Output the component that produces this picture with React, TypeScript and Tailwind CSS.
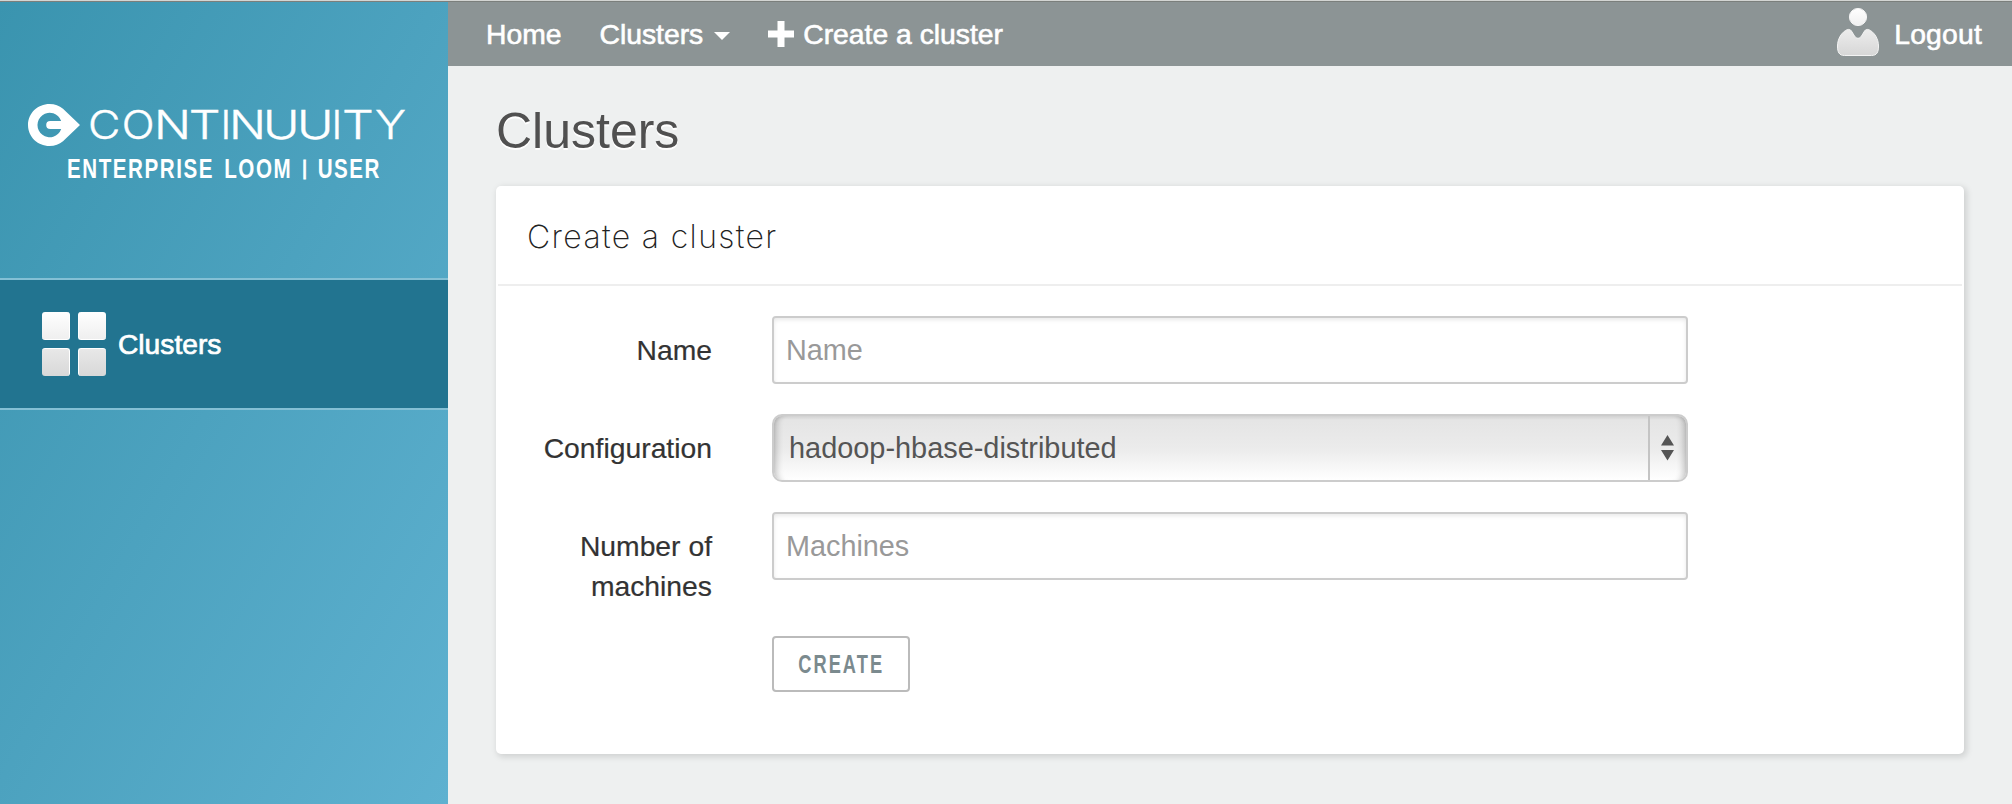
import type { ReactNode } from 'react';

function LogoMark() {
  return (
    <svg className="h-[42px] w-[53px] shrink-0" viewBox="0 0 53 42">
      <path
        fill="#fff"
        fillRule="evenodd"
        d="M21.5 0C9.600 0 0 9.300 0 21s9.600 21 21.500 21c5.500 0 9.700-1.800 13.500-4.800L52 21 35 4.800C31.200 1.800 27 0 21.500 0ZM33.200 17H22.200a4 4 0 0 0 0 8H33.200A12.200 12.200 0 1 1 33.200 17Z"
      />
    </svg>
  );
}

const letters: { char: string; x: number; width: number }[] = [
  { char: 'C', x: 7, width: 32.4 },
  { char: 'O', x: 40.7, width: 32.8 },
  { char: 'N', x: 73, width: 37 },
  { char: 'T', x: 107.8, width: 31.8 },
  { char: 'I', x: 139.4, width: 10.7 },
  { char: 'N', x: 148, width: 37 },
  { char: 'U', x: 182, width: 36.5 },
  { char: 'U', x: 216, width: 36.5 },
  { char: 'I', x: 250.4, width: 10.7 },
  { char: 'T', x: 260.9, width: 31.8 },
  { char: 'Y', x: 294, width: 31 },
];

function Wordmark() {
  return (
    <svg className="h-[42px] w-[330px] shrink-0 overflow-visible" viewBox="0 0 330 42">
      <text
        y="35.300"
        fill="#fff"
        stroke="#fff"
        strokeWidth="0.400"
        className="font-['Inter',sans-serif] text-[39.500px] font-light"
      >
        {letters.map((l, i) => (
          <tspan key={i} x={l.x} textLength={l.width} lengthAdjust="spacingAndGlyphs">
            {l.char}
          </tspan>
        ))}
      </text>
    </svg>
  );
}

function ClustersIcon() {
  return (
    <div className="grid size-16 shrink-0 grid-cols-2 gap-2">
      <span className="rounded-[3px] border-r border-b border-white bg-linear-to-b from-white to-[#efefef]" />
      <span className="rounded-[3px] border-b border-l border-white bg-linear-to-b from-white to-[#efefef]" />
      <span className="rounded-[3px] border-t border-r border-white bg-linear-to-b from-[#e8e8e8] to-[#d8d8d8]" />
      <span className="rounded-[3px] border-t border-l border-white bg-linear-to-b from-[#e8e8e8] to-[#d8d8d8]" />
    </div>
  );
}

function UserIcon() {
  return (
    <svg className="h-12 w-[42px] shrink-0" viewBox="0 0 42 48">
      <defs>
        <linearGradient id="user" x1="0" y1="0" x2="0" y2="48" gradientUnits="userSpaceOnUse">
          <stop offset="0" stopColor="#fff" />
          <stop offset="1" stopColor="#d6d6d6" />
        </linearGradient>
      </defs>
      <g fill="url(#user)" stroke="#f3f3f3" strokeWidth="1">
        <circle cx="21" cy="9" r="8.600" />
        <path d="M10.500 21.500c1.500-.3 3 .1 3.800 1.300l3.200 5.200c1.800 3 5.200 3 7 0l3.200-5.200c.8-1.200 2.300-1.600 3.800-1.300C37.500 24 41.500 31 41.500 38c0 6-1.500 9.500-7 9.500h-27C2 47.500.5 44 .5 38c0-7 4-14 10-16.500Z" />
      </g>
    </svg>
  );
}

function Row({ label, children }: { label: ReactNode; children: ReactNode }) {
  return (
    <div className="flex h-[98px] items-start">
      <div className="mr-[60px] w-[216px] pt-[14px] text-right text-[28.300px] leading-10 text-[#333] [-webkit-text-stroke:0.200px_#333]">
        {label}
      </div>
      {children}
    </div>
  );
}

const inputClass =
  "h-[68px] w-[916px] rounded-[4px] border-2 border-[#ccc] bg-white px-[12px] text-[28.800px] text-[#555] shadow-[inset_0_2px_4px_rgba(0,0,0,0.09)] outline-none placeholder:text-[#999] placeholder:opacity-100";

export default function App() {
  return (
    <div className="flex h-[804px] w-[2012px] flex-col overflow-hidden bg-[#eef0f0] font-['Liberation_Sans',Arial,sans-serif]">
      <div className="h-[2px] shrink-0 border-b border-[#7b7f7c] bg-[#d3d5d3]" />
      <div className="flex min-h-0 flex-1">
        <aside className="flex w-[448px] shrink-0 flex-col bg-linear-to-br from-[#3a94af] to-[#5eb1d0]">
          <div className="h-[276px] pt-[102px] text-white">
            <div className="flex h-[42px] pl-7">
              <LogoMark />
              <Wordmark />
            </div>
            <div className="mt-[8px] ml-[67px] flex h-[30px] w-[420px] origin-left scale-x-[0.735] items-baseline text-[28px] leading-[30px] font-bold tracking-[2.100px] whitespace-nowrap">
              <span>ENTERPRISE</span>
              <span className="ml-[14px]">LOOM</span>
              <span className="mr-[13px] ml-[14px] -translate-y-[3px] text-[20px] [-webkit-text-stroke:1px_#fff]">|</span>
              <span>USER</span>
            </div>
          </div>
          <a className="flex h-[132px] items-center gap-3 border-y-2 border-[#84c0d5] bg-[#227490] pl-[42px] text-white">
            <ClustersIcon />
            <span className="pt-px text-[28.200px] [-webkit-text-stroke:0.700px_#fff]">Clusters</span>
          </a>
        </aside>
        <main className="min-w-0 flex-1">
          <nav className="flex h-16 items-center bg-[#8c9495] pt-px pr-[30px] pl-[38px] text-[28.300px] text-white [-webkit-text-stroke:0.600px_#fff]">
            <a>Home</a>
            <a className="ml-[38px] flex items-center">
              Clusters
              <svg className="mt-[3px] ml-[11px] h-2 w-4" viewBox="0 0 16 8">
                <path fill="#fff" d="M0 0h16L8 8Z" />
              </svg>
            </a>
            <a className="ml-[38px] flex items-center">
              <svg className="-mt-[2px] mr-[9px] size-[26px]" viewBox="0 0 26 26">
                <path fill="#fff" d="M9.500 0h7v9.500H26v7h-9.500V26h-7v-9.500H0v-7h9.500Z" />
              </svg>
              Create a cluster
            </a>
            <a className="ml-auto flex items-center gap-[15px]">
              <span className="-mt-[6px] flex">
                <UserIcon />
              </span>
              <span className="tracking-[0.200px]">Logout</span>
            </a>
          </nav>
          <h1 className="mt-[35px] ml-12 text-[50px] leading-[60px] text-[#505050] [text-shadow:0_2px_0_#fff]">Clusters</h1>
          <section className="mt-[25px] ml-12 h-[568px] w-[1468px] rounded-[5px] bg-white shadow-[2px_2px_6px_1px_rgba(0,0,0,0.13)]">
            <h2 className="mx-[2px] flex h-[100px] items-center border-b-2 border-[#eee] pt-[3px] pl-[29px] font-['Inter',sans-serif] text-[32px] font-extralight tracking-[1.350px] text-[#222]">
              Create a cluster
            </h2>
            <div className="pt-[30px]">
              <Row label="Name">
                <input className={inputClass} placeholder="Name" />
              </Row>
              <Row label="Configuration">
                <div className="flex h-[68px] w-[916px] rounded-[10px] border-2 border-[#ccc] bg-linear-to-b from-[#e4e4e4] via-[#ebebeb] to-white text-[28.900px] leading-[64px] text-[#555] shadow-[inset_9px_0_6px_-6px_rgba(0,0,0,0.2),inset_-9px_0_6px_-6px_rgba(0,0,0,0.2),inset_0_2px_3px_rgba(0,0,0,0.08)]">
                  <span className="flex-1 pl-[15px]">hadoop-hbase-distributed</span>
                  <span className="flex w-[38px] items-center border-l-2 border-[#c4c4c4] pl-[11px]">
                    <svg className="h-[26px] w-[13px]" viewBox="0 0 13 26">
                      <path fill="#555" d="M6.500 0 13 10.500H0ZM0 15h13L6.500 25.500Z" />
                    </svg>
                  </span>
                </div>
              </Row>
              <Row label={<>Number of<br />machines</>}>
                <input className={inputClass} placeholder="Machines" />
              </Row>
              <button className="mt-[26px] ml-[276px] flex h-14 w-[138px] items-center justify-center rounded-[4px] border-2 border-[#bbb] bg-white text-[25.500px] font-bold text-[#7b8a8e]">
                <span className="scale-x-[0.715] tracking-[2.900px]">CREATE</span>
              </button>
            </div>
          </section>
        </main>
      </div>
    </div>
  );
}
